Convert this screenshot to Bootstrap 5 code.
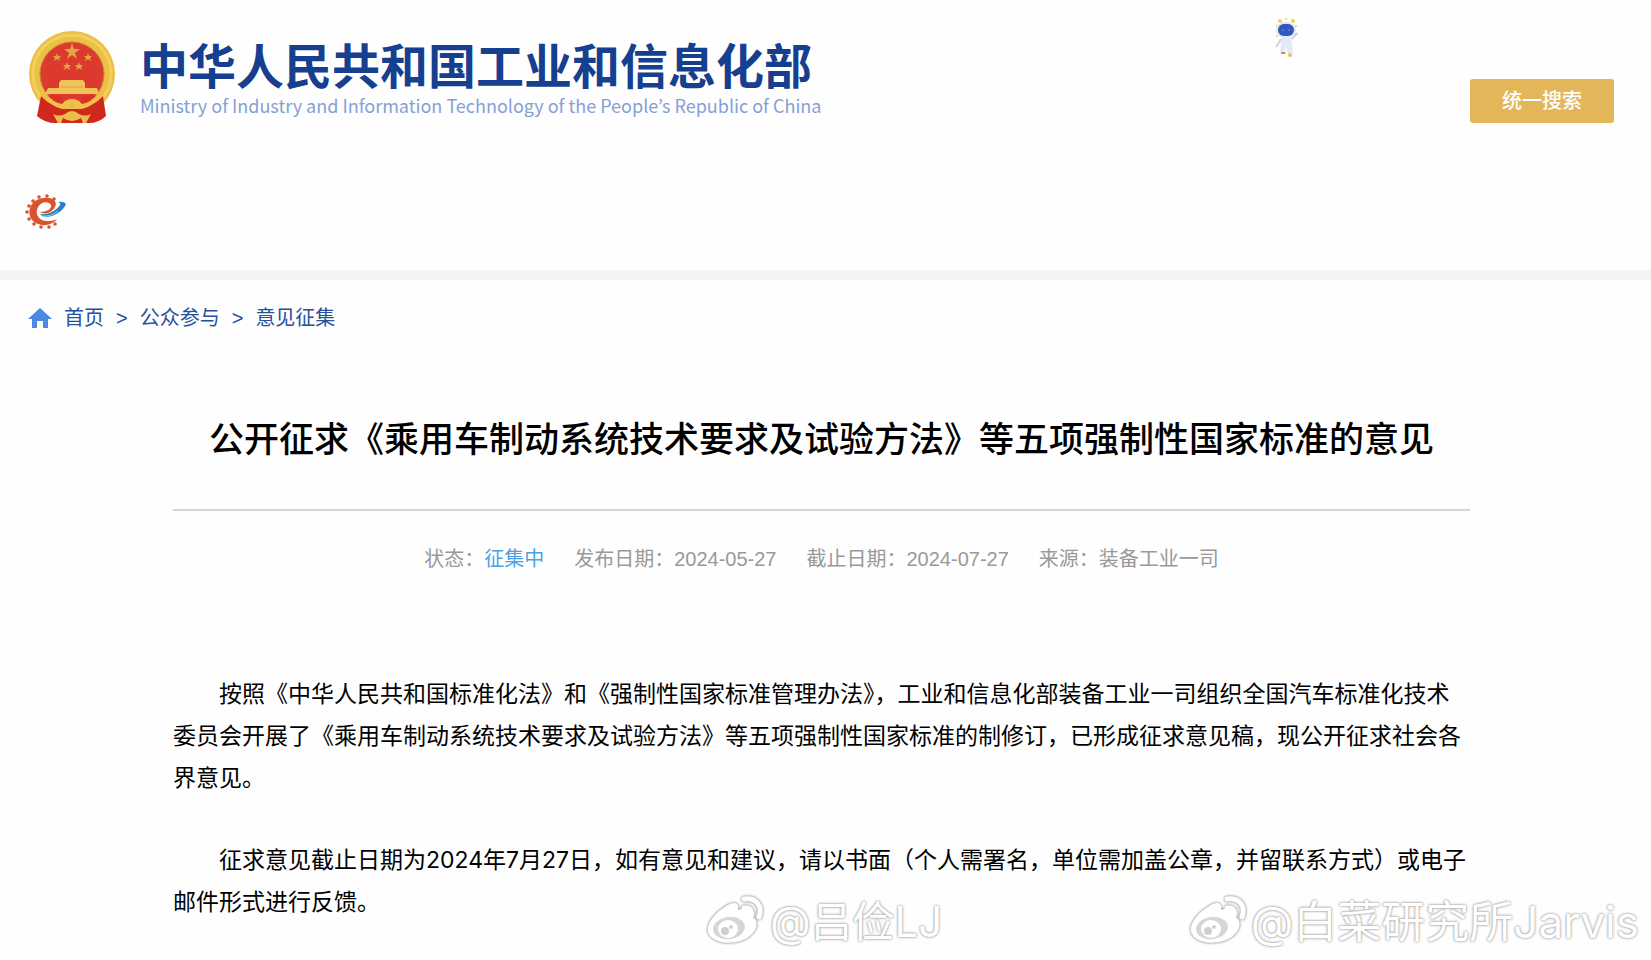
<!DOCTYPE html>
<html lang="zh-CN">
<head>
<meta charset="utf-8">
<meta name="viewport" content="width=device-width, initial-scale=1">
<title>公开征求《乘用车制动系统技术要求及试验方法》等五项强制性国家标准的意见</title>
<link href="https://cdn.jsdelivr.net/npm/bootstrap@5.3.0/dist/css/bootstrap.min.css" rel="stylesheet">
<style>
  body { font-family: "Liberation Sans", "Noto Sans CJK SC", sans-serif; background: #fefefe; color: #000; }
  .page { min-height: 100vh; overflow: hidden; }
  .site-header { padding: 30px 37px 40px 24px; border-bottom: 10px solid #f4f4f4; }
  .brand-cn { font: 700 48px/60px "Noto Sans CJK SC", sans-serif; color: #173f8f; }
  .brand-en { font: 400 18px/24px "Noto Sans CJK KR", sans-serif; color: #84a1d6; }
  .brand-text { margin-left: 22px; padding-top: 3px; }
  .robot { margin-right: 170px; margin-top: -14px; }
  .btn-search { width: 144px; height: 44px; margin-top: 49px; padding: 0; border: 0; border-radius: 3px; background: #e2b659; color: #fff; font-size: 20px; font-weight: 500; }
  .btn-search:hover { background: #d6a94b; color: #fff; }
  .partner { margin-top: 69px; margin-bottom: 1px; }
  .crumbs { padding: 23px 28px 0; font-size: 20px; line-height: 30px; color: #24509c; }
  .crumbs a { color: inherit; text-decoration: none; }
  .article { margin: 0 181px 0 173px; padding-top: 81px; }
  .article h1 { font-size: 35px; line-height: 52px; font-weight: 500; margin: 0; padding-bottom: 43px; border-bottom: 2px solid #d6d6d6; }
  .meta { gap: 30px; margin-top: 33px; font-size: 20px; line-height: 30px; color: #999; }
  .meta a { color: #4c9fe6; text-decoration: none; }
  .prose { margin-top: 99px; font-family: Inter, "Noto Sans CJK SC", sans-serif; font-size: 23px; line-height: 42px; }
  .prose p { text-indent: 2em; margin-bottom: 40px; }
  .prose p:last-child { margin-bottom: 0; }
  .watermark { bottom: 11px; font: 400 42px/50px Inter, "Noto Sans CJK SC", sans-serif; color: #fff; text-shadow: 0 0 2px #999, 0 0 3px #aaa; pointer-events: none; gap: 6px; }
  .watermark svg { filter: drop-shadow(0 0 1px #999) drop-shadow(0 0 1px #bbb); }
  .wm-center { left: 706px; }
  .wm-right { right: 12px; font-size: 44px; gap: 4px; }
</style>
</head>
<body>
<svg class="d-none" aria-hidden="true">
  <symbol id="weibo" viewBox="0 0 58 50">
    <path fill="#fff" d="M20 11C27 6 34 7 32 15C41 11 47 14 44 21C53 24 52 33 46 39C37 49 15 51 5 42C-4 33 7 19 20 11Z"/>
    <ellipse cx="23" cy="33" rx="16" ry="11" fill="#d6d6d6" transform="rotate(-8 23 33)"/>
    <ellipse cx="22" cy="34" rx="10" ry="9" fill="#fff"/>
    <circle cx="19" cy="36" r="4" fill="#cfcfcf"/><circle cx="25" cy="32" r="2" fill="#cfcfcf"/>
    <path fill="none" stroke="#fff" stroke-width="5" stroke-linecap="round" d="M38 4C50 2 57 11 53 22M38 13C44 12 47 16 45 21"/>
  </symbol>
</svg>
<div class="page position-relative">
  <header class="site-header">
    <div class="d-flex align-items-start">
      <svg class="flex-shrink-0" width="94" height="94" viewBox="0 0 94 94" role="img" aria-label="国徽">
        <circle cx="48" cy="44" r="43" fill="#ecbf48"/>
        <circle cx="48" cy="44" r="39" fill="none" stroke="#f3cf5c" stroke-width="3"/>
        <circle cx="48" cy="44" r="32" fill="#dc3a2f" stroke="#c9892a"/>
        <g fill="#e3a63e">
          <path d="M48 13L50 19H56L51 23L53 29L48 25L43 29L45 23L40 19H46Z"/>
          <path id="s" d="M33 23L34 26H37L35 28L36 31L33 29L30 31L31 28L29 26H32Z"/>
          <use href="#s" x="31"/><use href="#s" x="10" y="9"/><use href="#s" x="22" y="9"/>
        </g>
        <path d="M37 50H59L61 53V58H73L75 64H21L24 58H35V53Z" fill="#f1c458"/>
        <path d="M37 57H59" stroke="#dfa240"/>
        <path d="M24 66H36L40 73H56L60 66H72L60 76H36Z" fill="#d93229"/>
        <path d="M17 66Q26 76 40 79H56Q70 76 79 66L82 86Q74 94 62 93H34Q22 94 13 86Z" fill="#d0281f"/>
        <path d="M19 65Q29 72 38 74Q42 69 48 69Q54 69 58 74Q67 72 77 65Q70 76 58 79L48 76L38 79Q26 76 19 65Z" fill="#f0c04e"/>
        <path d="M29 84Q35 87 41 84Q48 78 55 84Q61 87 67 84L62 93H59L57 88Q48 94 39 88L37 93H34Z" fill="#edbd4b"/>
      </svg>
      <div class="brand-text text-nowrap">
        <div class="brand-cn">中华人民共和国工业和信息化部</div>
        <div class="brand-en" lang="en">Ministry of Industry and Information Technology of the People’s Republic of China</div>
      </div>
      <svg class="robot ms-auto flex-shrink-0" width="26" height="46" viewBox="0 0 26 46" role="img" aria-label="智能助手">
        <g fill="#f4d152"><circle cx="6" cy="5" r="2"/><circle cx="12" cy="3" r="1"/><circle cx="19" cy="5" r="2"/><circle cx="3" cy="10" r="1"/><circle cx="22" cy="10" r="1"/><circle cx="3" cy="20" r="1"/><circle cx="23" cy="18" r="1"/></g>
        <ellipse cx="12" cy="14" rx="10" ry="8" fill="#dfe4f6"/>
        <path d="M8 20H17L19 37H14L12 32L10 36H6Z" fill="#e4e8f7"/>
        <path d="M7 23L2 31M18 23L23 17" stroke="#cdd2ee" stroke-width="2"/>
        <rect x="4" y="8" width="16" height="12" rx="6" fill="#3156bd"/>
        <path d="M8 14H10M14 14H16" stroke="#5476d2" stroke-width="2"/>
        <path d="M7 36H12L11 38H7Z" fill="#c7955a"/><circle cx="16" cy="39" r="2" fill="#f0c33f"/>
      </svg>
      <button type="button" class="btn btn-search flex-shrink-0">统一搜索</button>
    </div>
    <svg class="partner d-block" width="43" height="36" viewBox="0 0 43 36" role="img" aria-label="工业和信息化">
      <g fill="#d9532d">
        <circle cx="9" cy="8" r="1.8"/><circle cx="15" cy="4" r="1.8"/><circle cx="23" cy="3" r="1.8"/><circle cx="30" cy="6" r="1.8"/><circle cx="5" cy="13" r="1.8"/><circle cx="3" cy="19" r="1.8"/><circle cx="5" cy="26" r="1.8"/><circle cx="10" cy="31" r="1.8"/><circle cx="17" cy="34" r="1.8"/><circle cx="25" cy="34" r="1.8"/><circle cx="31" cy="31" r="1.8"/>
        <path d="M33 26C27 34 14 34 8 27C2 18 7 6 20 5C29 4 34 9 31 14C28 20 20 22 16 19C24 19 28 15 27 12C25 8 17 8 14 14C10 22 16 29 25 28Q30 28 33 26Z"/>
      </g>
      <path d="M16 21C24 22 32 18 36 12Q37 10 34 9Q40 8 42 11C39 19 27 26 18 23Z" fill="#2c7fc6"/>
      <path d="M18 23Q27 24 34 18" fill="none" stroke="#8fd0ef" stroke-width="1"/>
    </svg>
  </header>

  <nav class="crumbs d-flex align-items-center" aria-label="面包屑">
    <svg class="me-2" width="24" height="20" viewBox="0 0 24 20" aria-hidden="true"><path fill="#4d88e5" d="M12 0L24 11H20V20H15V13H9V20H4V11H0Z"/></svg>
    <a class="ms-1" href="#">首页</a><span class="px-2 mx-1">&gt;</span><a href="#">公众参与</a><span class="px-2 mx-1">&gt;</span><a href="#">意见征集</a>
  </nav>

  <main class="article">
    <h1 class="text-center">公开征求《乘用车制动系统技术要求及试验方法》等五项强制性国家标准的意见</h1>
    <div class="meta d-flex flex-wrap justify-content-center">
      <span>状态：<a href="#">征集中</a></span>
      <span>发布日期：2024-05-27</span>
      <span>截止日期：2024-07-27</span>
      <span>来源：装备工业一司</span>
    </div>
    <div class="prose">
      <p>按照《中华人民共和国标准化法》和《强制性国家标准管理办法》，工业和信息化部装备工业一司组织全国汽车标准化技术委员会开展了《乘用车制动系统技术要求及试验方法》等五项强制性国家标准的制修订，已形成征求意见稿，现公开征求社会各界意见。</p>
      <p>征求意见截止日期为2024年7月27日，如有意见和建议，请以书面（个人需署名，单位需加盖公章，并留联系方式）或电子邮件形式进行反馈。</p>
    </div>
  </main>

  <div class="watermark wm-center position-absolute d-flex align-items-center"><svg class="mb-1" width="58" height="50"><use href="#weibo"/></svg><span>@吕俭LJ</span></div>
  <div class="watermark wm-right position-absolute d-flex align-items-center"><svg class="mb-1" width="58" height="50"><use href="#weibo"/></svg><span>@白菜研究所Jarvis</span></div>
</div>
<script src="https://cdn.jsdelivr.net/npm/bootstrap@5.3.0/dist/js/bootstrap.bundle.min.js"></script>
</body>
</html>
